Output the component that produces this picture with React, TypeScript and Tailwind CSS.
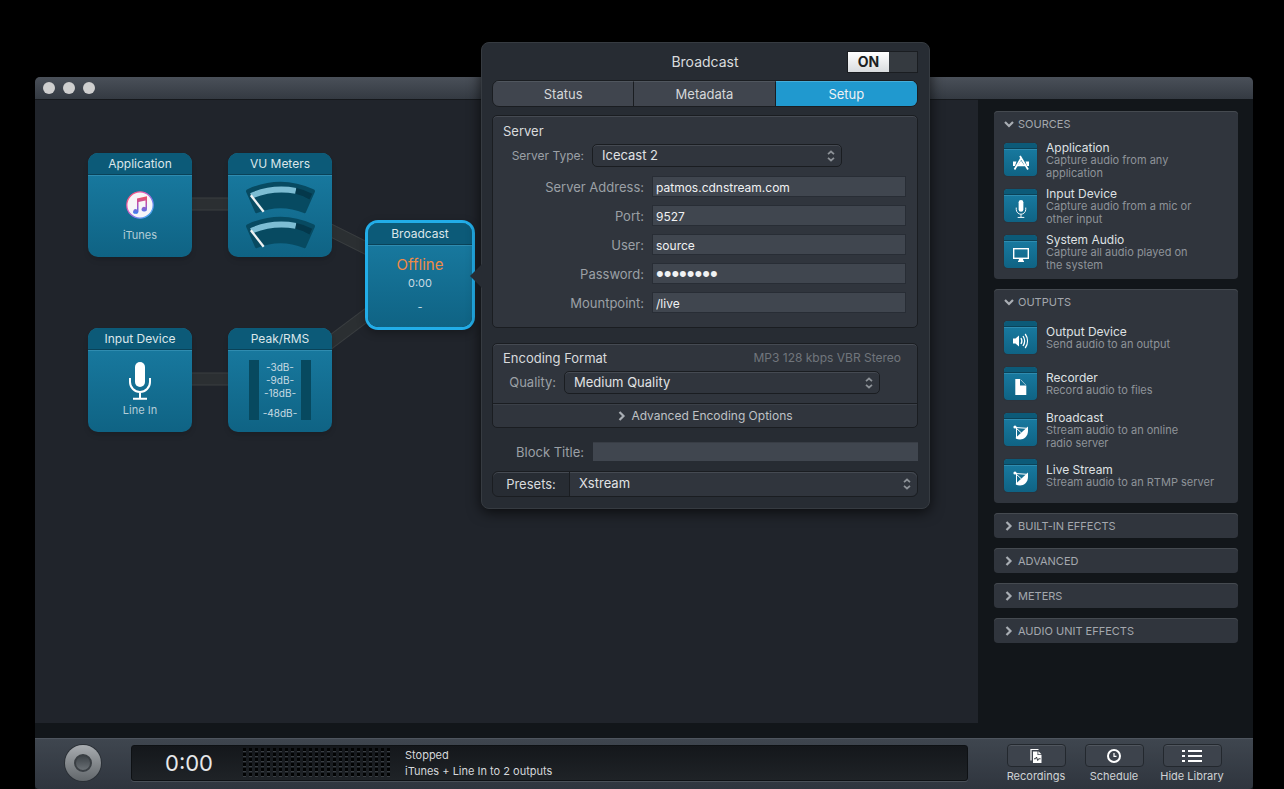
import {useState} from "react";
import type {ReactNode} from "react";

const SERVER_FIELDS = [
    {id: "address", label: "Server Address:", value: "patmos.cdnstream.com", type: "text"},
    {id: "port", label: "Port:", value: "9527", type: "text"},
    {id: "user", label: "User:", value: "source", type: "text"},
    {id: "password", label: "Password:", value: "hackme12", type: "password"},
    {id: "mountpoint", label: "Mountpoint:", value: "/live", type: "text"},
];

function MicIcon({className}: {className: string}) {
    return (
        <svg viewBox="0 0 24 38" className={className} fill="none">
            <rect x="7" y="0" width="10" height="25" rx="5" fill="#fff"/>
            <path d="M2 16v4a10 10 0 0 0 20 0v-4M12 30v6M5 36.8h14" stroke="#fff" strokeWidth="2"/>
        </svg>
    );
}

function AppIcon() {
    return (
        <svg viewBox="0 0 18 16" className="h-4 w-[18px]" fill="none">
            <path d="M1 6.500h3.500L3 11H1zM17 6.500h-3.500L15 11h2z" fill="#fff"/>
            <path d="M9.500 2.500 2.500 14.500M8 1l8 13.500" stroke="#fff" strokeWidth="1.800"/>
            <path d="M9 5.500 12 10H6z" fill="#fff"/>
            <path d="M5 10.500h8" stroke="#fff" strokeWidth="1.500"/>
        </svg>
    );
}

function DisplayIcon() {
    return (
        <svg viewBox="0 0 18 16" className="h-4 w-[18px]" fill="none">
            <rect x="1.700" y="1.700" width="14.600" height="9.600" stroke="#fff" strokeWidth="1.400"/>
            <path d="M7 12h4l.4 1.800H12V15H6v-1.200h.6z" fill="#fff"/>
        </svg>
    );
}

function SpeakerIcon() {
    return (
        <svg viewBox="0 0 18 16" className="h-4 w-[18px]" fill="none">
            <path d="M1 5.500h2.500L7 2.500v11L3.500 10.500H1z" fill="#fff"/>
            <path d="M9 5a6 6 0 0 1 0 6M11 3a9 9 0 0 1 0 10M13.200 1a12 12 0 0 1 0 14" stroke="#fff" strokeWidth="1.300"/>
        </svg>
    );
}

function FileIcon() {
    return (
        <svg viewBox="0 0 18 16" className="h-4 w-[18px]" fill="none">
            <path d="M3.300 0H8v6.500h6.300V16h-11z" fill="#fff"/>
            <path d="M8.500.5 13.800 6" stroke="#fff" strokeWidth=".8" opacity=".7"/>
        </svg>
    );
}

function DishIcon() {
    return (
        <svg viewBox="0 0 18 16" className="h-4 w-[18px]" fill="none">
            <circle cx="3" cy="2" r="1.600" fill="#fff"/>
            <path d="M16 1.500v4.500c0 5-4 8.500-8 8.500-2 0-3.500-.5-4.500-1.500z" fill="#fff"/>
            <path d="M4.500 2.500v11M3.500 2.500 9.500 8M3.500 2.500l11.500.8" stroke="#fff" strokeWidth="1"/>
        </svg>
    );
}

function Chevron({open}: {open?: boolean}) {
    return (
        <svg viewBox="0 0 10 10" className="h-[10px] w-[10px] shrink-0" fill="none">
            <path d={open ? "M1 3 5 7 9 3" : "M2.500 1 6.500 5 2.500 9"} stroke="#a9aeb4" strokeWidth="2.200"/>
        </svg>
    );
}

const LIBRARY = [
    {
        title: "SOURCES",
        items: [
            {name: "Application", text: "Capture audio from any\napplication", icon: <AppIcon/>},
            {name: "Input Device", text: "Capture audio from a mic or\nother input", icon: <MicIcon className="h-[18px] w-3"/>},
            {name: "System Audio", text: "Capture all audio played on\nthe system", icon: <DisplayIcon/>},
        ],
    },
    {
        title: "OUTPUTS",
        items: [
            {name: "Output Device", text: "Send audio to an output", icon: <SpeakerIcon/>},
            {name: "Recorder", text: "Record audio to files", icon: <FileIcon/>},
            {name: "Broadcast", text: "Stream audio to an online\nradio server", icon: <DishIcon/>},
            {name: "Live Stream", text: "Stream audio to an RTMP server", icon: <DishIcon/>},
        ],
    },
    {title: "BUILT-IN EFFECTS", items: []},
    {title: "ADVANCED", items: []},
    {title: "METERS", items: []},
    {title: "AUDIO UNIT EFFECTS", items: []},
];

function Block({title, className, children}: {title: string; className: string; children: ReactNode}) {
    return (
        <div className={`absolute flex h-[104px] w-[104px] flex-col overflow-hidden rounded-[10px] bg-linear-to-b from-[#1a7ea5] to-[#0f6384] ${className}`}>
            <div className="flex h-[22px] shrink-0 items-center justify-center border-b border-[#0a4258] bg-[#0c5a78] pt-px text-[12px] text-[#dbe6ea]">
                {title}
            </div>
            <div className="flex flex-1 flex-col items-center border-t border-[#2f8cb0]">{children}</div>
        </div>
    );
}

function VuMeter() {
    return (
        <svg viewBox="0 0 214 100" className="h-[33px] w-[71px]">
            <path d="M7 25Q107-21 207 25q6 3 4 8l-27 62q-2 4-6 2-71-29-142 0-4 2-6-2L3 33q-2-5 4-8z" fill="#074a61"/>
            <path d="M15 37Q80 8 155 21l-3 18Q85 27 22 53z" fill="#7dbdd3"/>
            <path d="M155 21q26 5 48 18l-8 17q-20-12-43-17z" fill="#04384b"/>
            <path d="M17 43 56 93" stroke="#eef2f3" strokeWidth="7"/>
        </svg>
    );
}

function ITunesIcon() {
    return (
        <svg viewBox="0 0 28 28" className="h-7 w-7">
            <defs>
                <linearGradient id="ring" x1="0" y1="0" x2="1" y2="1">
                    <stop offset="0" stopColor="#f9585f"/>
                    <stop offset=".35" stopColor="#e65ab8"/>
                    <stop offset=".65" stopColor="#7a7cf0"/>
                    <stop offset="1" stopColor="#35c3f2"/>
                </linearGradient>
                <linearGradient id="note" x1="0" y1="0" x2="0" y2="1">
                    <stop offset="0" stopColor="#f0505e"/>
                    <stop offset=".5" stopColor="#b04fc0"/>
                    <stop offset="1" stopColor="#3b82f0"/>
                </linearGradient>
            </defs>
            <circle cx="14" cy="14" r="13.200" fill="#f7f5f8" stroke="url(#ring)" strokeWidth="1.300"/>
            <path d="M11 7.500 21 5.300V18.200a2.700 2.300 0 1 1-1.500-2V9.500l-7 1.600v9.400a2.700 2.300 0 1 1-1.500-2z" fill="url(#note)"/>
        </svg>
    );
}

function Cables() {
    const paths = ["M105 104H245", "M105 279H245", "M245 105 385 175", "M245 280 385 175"];
    return (
        <svg className="absolute top-0 left-0 h-[400px] w-[440px]" fill="none">
            {paths.map((d) => (
                <g key={d}>
                    <path d={d} stroke="#3a3e41" strokeWidth="13"/>
                    <path d={d} stroke="#2b2f32" strokeWidth="11"/>
                </g>
            ))}
        </svg>
    );
}

function PopupSelect({id, value, className}: {id: string; value: string; className: string}) {
    return (
        <div className={`relative ${className}`}>
            <select
                id={id}
                defaultValue={value}
                className="block h-full w-full appearance-none rounded-[inherit] bg-transparent px-[9px] text-[13px] text-[#e0e2e4] outline-none"
            >
                <option>{value}</option>
            </select>
            <svg viewBox="0 0 8 12" className="pointer-events-none absolute inset-y-0 right-[6px] my-auto h-3 w-2" fill="none">
                <path d="M1 4.200 4 1.500l3 2.700M1 7.800l3 2.700 3-2.700" stroke="#8d9298" strokeWidth="1.700"/>
            </svg>
        </div>
    );
}

function BroadcastPanel() {
    const [on, setOn] = useState(true);
    const [tab, setTab] = useState("Setup");

    return (
        <div className="absolute -top-[35px] left-[446px] w-[449px] rounded-lg border border-[#363b41] bg-[#272c33] pt-[7px] pr-[11px] pb-[11px] pl-[10px] shadow-[0_3px_14px_rgba(0,0,0,0.7)]">
            {/* Arrow */}
            <svg viewBox="0 0 12 24" className="absolute top-[221px] -left-3 h-6 w-3">
                <path d="M12 0 0 12l12 12z" fill="#272c33"/>
            </svg>

            <div className="grid grid-cols-[1fr_auto_1fr] items-center">
                <h1 className="col-start-2 pt-px text-[14px] leading-[22px] text-[#d9dbdd]">Broadcast</h1>
                <button
                    type="button"
                    role="switch"
                    aria-checked={on}
                    aria-label="Broadcast"
                    onClick={() => setOn(!on)}
                    className="flex h-[22px] w-[71px] justify-self-end border border-[#1a1d21] bg-[#353a40]"
                >
                    <span className="flex h-5 w-[41px] items-center justify-center bg-linear-to-b from-white to-[#d9dcdf] text-[14px] font-bold text-[#1c1f23]">
                        ON
                    </span>
                </button>
            </div>

            <div role="tablist" className="mt-[7px] grid h-[27px] grid-cols-3 overflow-hidden rounded-[7px] border border-[#1a1d21] bg-[#40454e]">
                {["Status", "Metadata", "Setup"].map((name) => (
                    <button
                        key={name}
                        type="button"
                        role="tab"
                        aria-selected={tab === name}
                        onClick={() => setTab(name)}
                        className={`border-t border-r border-r-[#1a1d21] pt-px text-[13px] last:border-r-0 ${tab === name ? "border-t-[#47aedb] bg-[#2099cf] text-[#eef1f3]" : "border-t-[#50565e] text-[#d5d7da]"}`}
                    >
                        {name}
                    </button>
                ))}
            </div>

            {/* Server */}
            <div className="mt-2 rounded-[5px] border border-[#1a1d21] bg-[#30353d] pr-[11px] pb-[14px] pl-[10px] shadow-[inset_0_1px_0_#454a52]">
                <h2 className="pt-1 text-[13px] leading-[22px] text-[#d9dbdd]">Server</h2>
                <div className="mt-[2px] flex h-[23px] items-center gap-2">
                    <label htmlFor="server-type" className="w-[81px] text-right text-[12px] text-[#9ba0a6]">Server Type:</label>
                    <PopupSelect id="server-type" value="Icecast 2" className="h-[23px] w-[250px] rounded-[5px] border border-[#1a1d21] shadow-[inset_0_1px_0_#454a52]"/>
                </div>
                <div className="mt-[9px] grid grid-cols-[141px_1fr] items-center gap-x-2 gap-y-2">
                    {SERVER_FIELDS.map((field) => (
                        <div key={field.id} className="contents">
                            <label htmlFor={field.id} className="pt-px text-right text-[13px] leading-5 text-[#9ba0a6]">{field.label}</label>
                            <input
                                id={field.id}
                                type={field.type}
                                defaultValue={field.value}
                                className={`h-[21px] w-full border border-[#282d35] bg-[#40464f] px-[3px] text-[#f1f2f3] outline-none ${field.type === "password" ? "font-['Liberation_Sans',sans-serif] text-[22px]" : "pt-px text-[12px]"}`}
                            />
                        </div>
                    ))}
                </div>
            </div>

            {/* Encoding */}
            <div className="mt-[15px] rounded-[5px] border border-[#1a1d21] bg-[#30353d] shadow-[inset_0_1px_0_#454a52]">
                <div className="flex items-center justify-between pt-[3px] pr-4 pl-[10px] leading-[22px]">
                    <h2 className="text-[13px] text-[#d9dbdd]">Encoding Format</h2>
                    <span className="text-[12px] text-[#70757c]">MP3 128 kbps VBR Stereo</span>
                </div>
                <div className="mt-[2px] flex h-[23px] items-center gap-2 pl-[10px]">
                    <label htmlFor="quality" className="w-[53px] text-right text-[13px] text-[#9ba0a6]">Quality:</label>
                    <PopupSelect id="quality" value="Medium Quality" className="h-[23px] w-[316px] rounded-[5px] border border-[#1a1d21] shadow-[inset_0_1px_0_#454a52]"/>
                </div>
                <button type="button" className="mt-[9px] flex h-6 w-full items-center justify-center gap-1 border-t border-[#1a1d21] text-[12px] text-[#bfc2c6] shadow-[inset_0_1px_0_#3b4048]">
                    <Chevron/>
                    Advanced Encoding Options
                </button>
            </div>

            <div className="mt-[14px] flex items-center gap-[9px]">
                <label htmlFor="block-title" className="w-[92px] pt-px text-right text-[13px] leading-[18px] text-[#9ba0a6]">Block Title:</label>
                <input id="block-title" type="text" className="h-[19px] min-w-0 flex-1 border-t border-[#383d45] bg-[#40464f] px-1 text-[12px] text-[#f1f2f3] outline-none"/>
            </div>

            <div className="mt-[10px] flex h-[26px] rounded-md border border-[#1a1d21] shadow-[inset_0_1px_0_#454a52]">
                <label htmlFor="presets" className="flex w-[77px] items-center justify-center border-r border-[#1a1d21] pt-px text-[13px] text-[#d9dbdd]">Presets:</label>
                <PopupSelect id="presets" value="Xstream" className="flex-1 rounded-r-md bg-[#30353d] shadow-[inset_0_1px_0_#454a52]"/>
            </div>
        </div>
    );
}

function Canvas() {
    return (
        <div className="relative mb-[15px] min-w-0 flex-1 border-t border-[#15181c] bg-[#20242b]">
            <Cables/>
            <Block title="Application" className="top-[53px] left-[53px] shadow-md">
                <div className="mt-[15px]"><ITunesIcon/></div>
                <span className="mt-2 text-[11px] leading-4 text-[#b4cdd7]">iTunes</span>
            </Block>
            <Block title="VU Meters" className="top-[53px] left-[193px] shadow-md">
                <div className="mt-[5px] flex flex-col gap-[2px]">
                    <VuMeter/>
                    <VuMeter/>
                </div>
            </Block>
            <Block title="Input Device" className="top-[228px] left-[53px] shadow-md">
                <MicIcon className="mt-[11px] h-[38px] w-6"/>
                <span className="mt-[2px] text-[11px] leading-4 text-[#b4cdd7]">Line In</span>
            </Block>
            <Block title="Peak/RMS" className="top-[228px] left-[193px] shadow-md">
                <div className="mt-[9px] flex h-[60px] w-[62px] justify-between">
                    <div className="w-[10px] bg-[#07495f]"/>
                    <div className="flex flex-col items-center pt-px text-[10px] leading-[13px] text-[#c9dbe2]">
                        <span>-3dB-</span>
                        <span>-9dB-</span>
                        <span>-18dB-</span>
                        <span className="mt-[7px]">-48dB-</span>
                    </div>
                    <div className="w-[10px] bg-[#07495f]"/>
                </div>
            </Block>
            <Block title="Broadcast" className="top-[123px] left-[333px] shadow-[0_0_0_3px_#22ade8,0_3px_8px_3px_rgba(0,0,0,0.3)]">
                <span className="mt-[9px] text-[15px] leading-5 text-[#f08b45]">Offline</span>
                <span className="text-[11px] leading-4 text-[#c9dbe2]">0:00</span>
                <span className="mt-2 text-[11px] leading-4 text-[#c9dbe2]">-</span>
            </Block>
        </div>
    );
}

function Library() {
    return (
        <aside className="flex w-[275px] shrink-0 flex-col gap-[10px] pt-3 pr-[15px] pl-4">
            {LIBRARY.map((group) => (
                <section key={group.title} className={`rounded bg-[#30353d] shadow-[inset_0_1px_0_#454a50] ${group.items.length > 0 ? "pb-1" : ""}`}>
                    <button
                        type="button"
                        aria-expanded={group.items.length > 0}
                        className={`flex w-full items-center gap-1 pl-[10px] text-[11px] text-[#a4a8ae] ${group.items.length > 0 ? "h-[26px]" : "h-[25px] pt-px"}`}
                    >
                        <Chevron open={group.items.length > 0}/>
                        {group.title}
                    </button>
                    {group.items.map((item) => (
                        <div key={item.name} className="flex h-[46px] items-center gap-[9px] pl-[10px]">
                            <div className="mt-[6px] flex h-[33px] w-[33px] shrink-0 flex-col self-start overflow-hidden rounded bg-linear-to-b from-[#1a7ea5] to-[#0f6384] shadow-[0_0_1px_#0a2835]">
                                <div className="h-[6px] shrink-0 border-b border-[#0a4258] bg-[#0c5a78]"/>
                                <div className="flex flex-1 items-center justify-center border-t border-[#2f8cb0]">{item.icon}</div>
                            </div>
                            <div className="whitespace-pre-line">
                                <h3 className="text-[12px] leading-[13px] text-[#dfe1e3]">{item.name}</h3>
                                <p className="text-[11px] leading-[13px] text-[#8e9399]">{item.text}</p>
                            </div>
                        </div>
                    ))}
                </section>
            ))}
        </aside>
    );
}

function ToolButton({label, children}: {label: string; children: ReactNode}) {
    return (
        <button type="button" className="flex w-[78px] flex-col items-center text-[11px] leading-4 text-[#cfd2d5]">
            <span className="flex h-[23px] w-[59px] items-center justify-center rounded border border-[#23282e] bg-[#3d434c] shadow-[inset_0_1px_0_#50565e]">
                {children}
            </span>
            <span className="mt-px whitespace-nowrap">{label}</span>
        </button>
    );
}

function Transport() {
    return (
        <footer className="flex h-[51px] shrink-0 items-center rounded-b border-t border-[#4e555e] bg-linear-to-b from-[#3f464f] to-[#2f353e] pr-[22px] pb-[2px] pl-[30px]">
            <button
                type="button"
                aria-label="Record"
                className="flex h-9 w-9 shrink-0 items-center justify-center rounded-full bg-linear-to-b from-[#a9adb1] to-[#62676b] shadow-[0_0_0_1px_#2b3036]"
            >
                <span className="h-[18px] w-[18px] rounded-full border-2 border-[#3a3f44] bg-linear-to-b from-[#3d4348] to-[#6a7075]"/>
            </button>

            <div className="ml-[30px] flex h-9 min-w-0 flex-1 items-center rounded-[3px] border border-[#0e1114] bg-linear-to-b from-[#14171b] to-[#1f2327] shadow-[0_1px_0_#4a5058]">
                <span className="w-[111px] pl-[33px] text-[22px] text-[#e6e8ea]">0:00</span>
                <svg className="h-[30px] w-[148px] shrink-0">
                    <defs>
                        <pattern id="leds" width="6" height="5" patternUnits="userSpaceOnUse">
                            <rect width="3" height="3" fill="#020303"/>
                            <rect y="3" width="3" height="1" fill="#3a3f44"/>
                        </pattern>
                    </defs>
                    <rect width="148" height="30" fill="url(#leds)"/>
                </svg>
                <div className="ml-[14px] text-[11px] leading-4 whitespace-nowrap text-[#d5d8db]">
                    <p>Stopped</p>
                    <p>iTunes + Line In to 2 outputs</p>
                </div>
            </div>

            <div className="mt-[2px] ml-[29px] flex shrink-0">
                <ToolButton label="Recordings">
                    <svg viewBox="0 0 14 16" className="h-4 w-[14px]" fill="none">
                        <path d="M2 12.500V1.500h7.500" stroke="#fff" strokeWidth="1.200"/>
                        <path d="M4 3.500h4.500V7H12.500v8H4z" fill="#fff"/>
                        <path d="M9.300 3.200 12.500 6.300H9.300z" fill="#fff"/>
                        <path d="M5 10.800h1.500L7.500 9l1.200 3.500.9-1.700h2" stroke="#23282e" strokeWidth=".9"/>
                    </svg>
                </ToolButton>
                <ToolButton label="Schedule">
                    <svg viewBox="0 0 16 16" className="h-4 w-4" fill="none">
                        <circle cx="8" cy="8" r="6" stroke="#fff" strokeWidth="2"/>
                        <path d="M8 5v3.300h2.500" stroke="#fff" strokeWidth="1.200"/>
                    </svg>
                </ToolButton>
                <ToolButton label="Hide Library">
                    <svg viewBox="0 0 20 14" className="h-[14px] w-5" fill="#fff">
                        <path d="M0 1h3v2H0zM0 6h3v2H0zM0 11h3v2H0zM6 1h14v2H6zM6 6h14v2H6zM6 11h14v2H6z"/>
                    </svg>
                </ToolButton>
            </div>
        </footer>
    );
}

export default function App() {
    return (
        <div className="flex min-h-screen flex-col bg-black pt-[77px] pr-[31px] pl-[35px] font-[Inter,'Liberation_Sans',sans-serif]">
            <div className="relative flex flex-1 flex-col rounded-t-[5px] bg-[#12161a]">
                {/* Title bar */}
                <div className="flex h-[22px] shrink-0 items-center gap-2 rounded-t-[5px] bg-linear-to-b from-[#4a5059] to-[#343a42] pl-2">
                    <button type="button" aria-label="Close" className="h-3 w-3 rounded-full bg-[#cfcfcf]"/>
                    <button type="button" aria-label="Minimize" className="h-3 w-3 rounded-full bg-[#cfcfcf]"/>
                    <button type="button" aria-label="Zoom" className="h-3 w-3 rounded-full bg-[#cfcfcf]"/>
                </div>
                <div className="flex flex-1">
                    <Canvas/>
                    <Library/>
                </div>
                <Transport/>
                <BroadcastPanel/>
            </div>
        </div>
    );
}
